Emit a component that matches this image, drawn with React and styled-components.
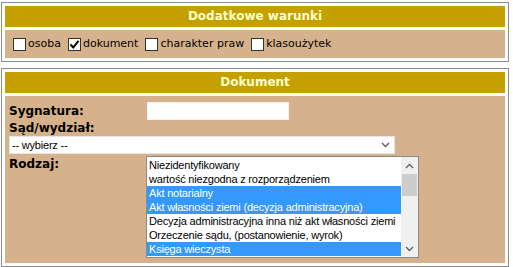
import React from 'react';
import styled, { createGlobalStyle } from 'styled-components';

const GlobalStyle = createGlobalStyle`
  html, body {
    margin: 0;
    padding: 0;
    background: #ffffff;
  }
  body {
    font-family: 'DejaVu Sans', Verdana, sans-serif;
    font-size: 11px;
    color: #000;
  }
`;

const gold = '#c4a000';
const tan = '#d6b28c';

const warunki = [
  { label: 'osoba', checked: false },
  { label: 'dokument', checked: true },
  { label: 'charakter praw', checked: false },
  { label: 'klasoużytek', checked: false },
];

const rodzaje = [
  { label: 'Niezidentyfikowany', selected: false },
  { label: 'wartość niezgodna z rozporządzeniem', selected: false },
  { label: 'Akt notarialny', selected: true },
  { label: 'Akt własności ziemi (decyzja administracyjna)', selected: true },
  { label: 'Decyzja administracyjna inna niż akt własności ziemi', selected: false },
  { label: 'Orzeczenie sądu, (postanowienie, wyrok)', selected: false },
  { label: 'Księga wieczysta', selected: true },
];

const Chevron = ({ up }) => (
  <svg width="9" height="6" viewBox="0 0 9 6">
    <path
      d={up ? 'M1 5 L4.5 1.5 L8 5' : 'M1 1 L4.5 4.5 L8 1'}
      fill="none"
      stroke="#606060"
      strokeWidth="1.3"
    />
  </svg>
);

const App = () => {
  return (
    <StPage>
      <GlobalStyle />
      <StPanel>
        <StHeader>Dodatkowe warunki</StHeader>
        <StCheckRow>
          {warunki.map((item) => (
            <StCheckItem key={item.label}>
              <StBox>
                {item.checked && (
                  <svg width="11" height="11" viewBox="0 0 11 11">
                    <path d="M1.5 5.5 L4.2 8.5 L9.5 1.8" fill="none" stroke="#000" strokeWidth="2" />
                  </svg>
                )}
              </StBox>
              {item.label}
            </StCheckItem>
          ))}
        </StCheckRow>
      </StPanel>

      <StPanel $gapTop>
        <StHeader>Dokument</StHeader>
        <StForm>
          <StLabel>Sygnatura:</StLabel>
          <StField>
            <StInput type="text" />
          </StField>
          <StLabel $wide>Sąd/wydział:</StLabel>
          <StSelectRow>
            <StSelect>
              <span>-- wybierz --</span>
              <Chevron />
            </StSelect>
          </StSelectRow>
          <StLabel $top>Rodzaj:</StLabel>
          <StField>
            <StListBox>
              <StOptions>
                {rodzaje.map((item) => (
                  <StOption key={item.label} $selected={item.selected}>
                    {item.label}
                  </StOption>
                ))}
              </StOptions>
              <StScrollBar>
                <StArrow>
                  <Chevron up />
                </StArrow>
                <StTrack>
                  <StThumb />
                </StTrack>
                <StArrow>
                  <Chevron />
                </StArrow>
              </StScrollBar>
            </StListBox>
          </StField>
        </StForm>
      </StPanel>
    </StPage>
  );
};

export default App;

const StPage = styled.div`
  padding: 2px 0 0 1px;
  width: 508px;
`;

const StPanel = styled.div`
  display: flex;
  flex-direction: column;
  gap: 3px;
  border: 1px solid #8c8c8c;
  padding: 3px;
  background: #ffffff;
  margin-top: ${(props) => (props.$gapTop ? '6px' : '0')};
`;

const StHeader = styled.div`
  height: 21px;
  line-height: 21px;
  background: ${gold};
  color: #ffffc8;
  text-align: center;
  font-weight: bold;
  font-size: 12px;
  font-family: 'DejaVu Sans', Verdana, sans-serif;
`;

const StCheckRow = styled.div`
  display: flex;
  align-items: center;
  background: ${tan};
  padding: 7px 4px;
  height: 14px;
  line-height: 14px;
`;

const StCheckItem = styled.label`
  display: flex;
  align-items: center;
  margin-right: 3px;
`;

const StBox = styled.span`
  display: flex;
  align-items: center;
  justify-content: center;
  box-sizing: border-box;
  width: 13px;
  height: 13px;
  border: 1px solid #333333;
  background: #ffffff;
  margin: 0 2px 0 4px;
`;

const StForm = styled.div`
  display: grid;
  grid-template-columns: 137px 1fr;
  align-items: center;
  background: ${tan};
  padding: 5px 4px 4px 4px;
`;

const StLabel = styled.div`
  font-weight: bold;
  font-size: 12px;
  line-height: 14px;
  grid-column: ${(props) => (props.$wide ? '1 / span 2' : 'auto')};
  align-self: ${(props) => (props.$top ? 'start' : 'center')};
  padding-top: ${(props) => (props.$top ? '2px' : '0')};
`;

const StField = styled.div`
  display: flex;
  padding: 1px 0;
`;

const StInput = styled.input`
  box-sizing: border-box;
  width: 142px;
  height: 18px;
  margin: 0 0 0 1px;
  border: 1px solid #f2f2f2;
  background: #ffffff;
  outline: none;
`;

const StSelectRow = styled.div`
  grid-column: 1 / span 2;
  display: flex;
  padding: 1px 0;
`;

const StSelect = styled.div`
  box-sizing: border-box;
  width: 386px;
  height: 18px;
  display: flex;
  align-items: center;
  justify-content: space-between;
  padding: 0 4px 0 2px;
  background: #ffffff;
  border: 1px solid #e6e6e6;
  font-family: 'Liberation Sans', Arial, sans-serif;
  font-size: 11px;
  letter-spacing: -0.2px;
`;

const StListBox = styled.div`
  box-sizing: border-box;
  display: flex;
  width: 273px;
  height: 102px;
  border: 1px solid #8a8a8a;
  background: #ffffff;
`;

const StOptions = styled.div`
  flex: 1;
  overflow: hidden;
  padding-top: 1px;
`;

const StOption = styled.div`
  height: 14px;
  line-height: 14px;
  padding-left: 2px;
  white-space: nowrap;
  font-family: 'Liberation Sans', Arial, sans-serif;
  font-size: 11px;
  letter-spacing: -0.2px;
  background: ${(props) => (props.$selected ? '#3399ff' : 'transparent')};
  color: ${(props) => (props.$selected ? '#ffffff' : '#000000')};
`;

const StScrollBar = styled.div`
  width: 17px;
  display: flex;
  flex-direction: column;
  background: #f0f0f0;
`;

const StArrow = styled.div`
  height: 17px;
  display: flex;
  align-items: center;
  justify-content: center;
`;

const StTrack = styled.div`
  flex: 1;
  display: flex;
  flex-direction: column;
`;

const StThumb = styled.div`
  height: 22px;
  margin: 0 1px;
  background: #cdcdcd;
`;
